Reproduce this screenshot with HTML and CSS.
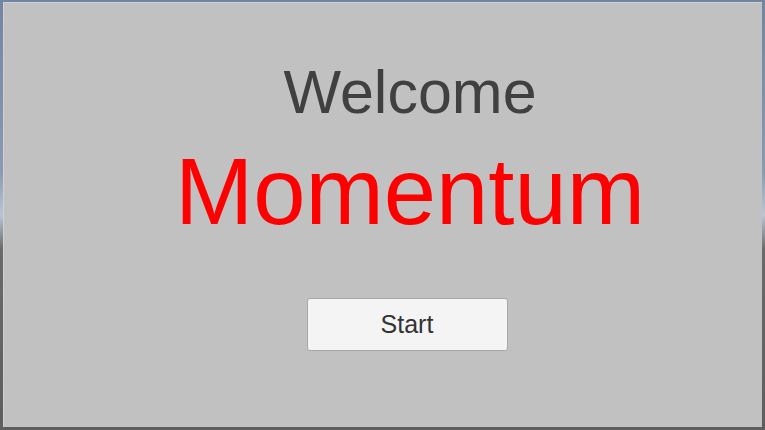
FILE: index.html
```html
<!DOCTYPE html>
<html>
<head>
	<title>Momentum</title>
	<meta charset="utf-8"/>
	<link rel="stylesheet" href="styles.css">
</head>
<body>
	<div class="frame">
		<div class="menu">
			<div class="welcome">Welcome</div>
			<div class="title">Momentum</div>
			<button class="start">Start</button>
		</div>
	</div>
</body>
</html>
```

FILE: styles.css
```css
html,body{
	margin: 0;
	padding: 0;
}
body{
	width: 765px;
	height: 430px;
	overflow: hidden;
	background: linear-gradient(#7384a2 0%, #8a9ab3 40%, #b8c6d6 50%, #6a6a6a 58%, #5e5e5e 100%);
	font-family: "Liberation Sans", Arial, sans-serif;
}
.frame{
	margin: 2px 3px 0 3px;
	height: 425px;
	background-color: #c1c1c1;
	box-shadow: inset 1px 1px 0 #d0d0d0;
}
.menu{
	display: flex;
	flex-direction: column;
	align-items: center;
	padding: 60px 0 0 55px;
}
.welcome{
	font-size: 61px;
	line-height: 60px;
	color: #404040;
}
.title{
	margin-top: 24px;
	font-size: 94px;
	line-height: 92px;
	color: #ff0000;
}
.start{
	margin-top: 60px;
	margin-left: -6px;
	width: 201px;
	height: 53px;
	background-color: #f4f4f4;
	border: 1px solid #a8a8a8;
	border-radius: 3px;
	font-family: "Liberation Sans", Arial, sans-serif;
	font-size: 25px;
	color: #333;
	padding: 0;
}
```
